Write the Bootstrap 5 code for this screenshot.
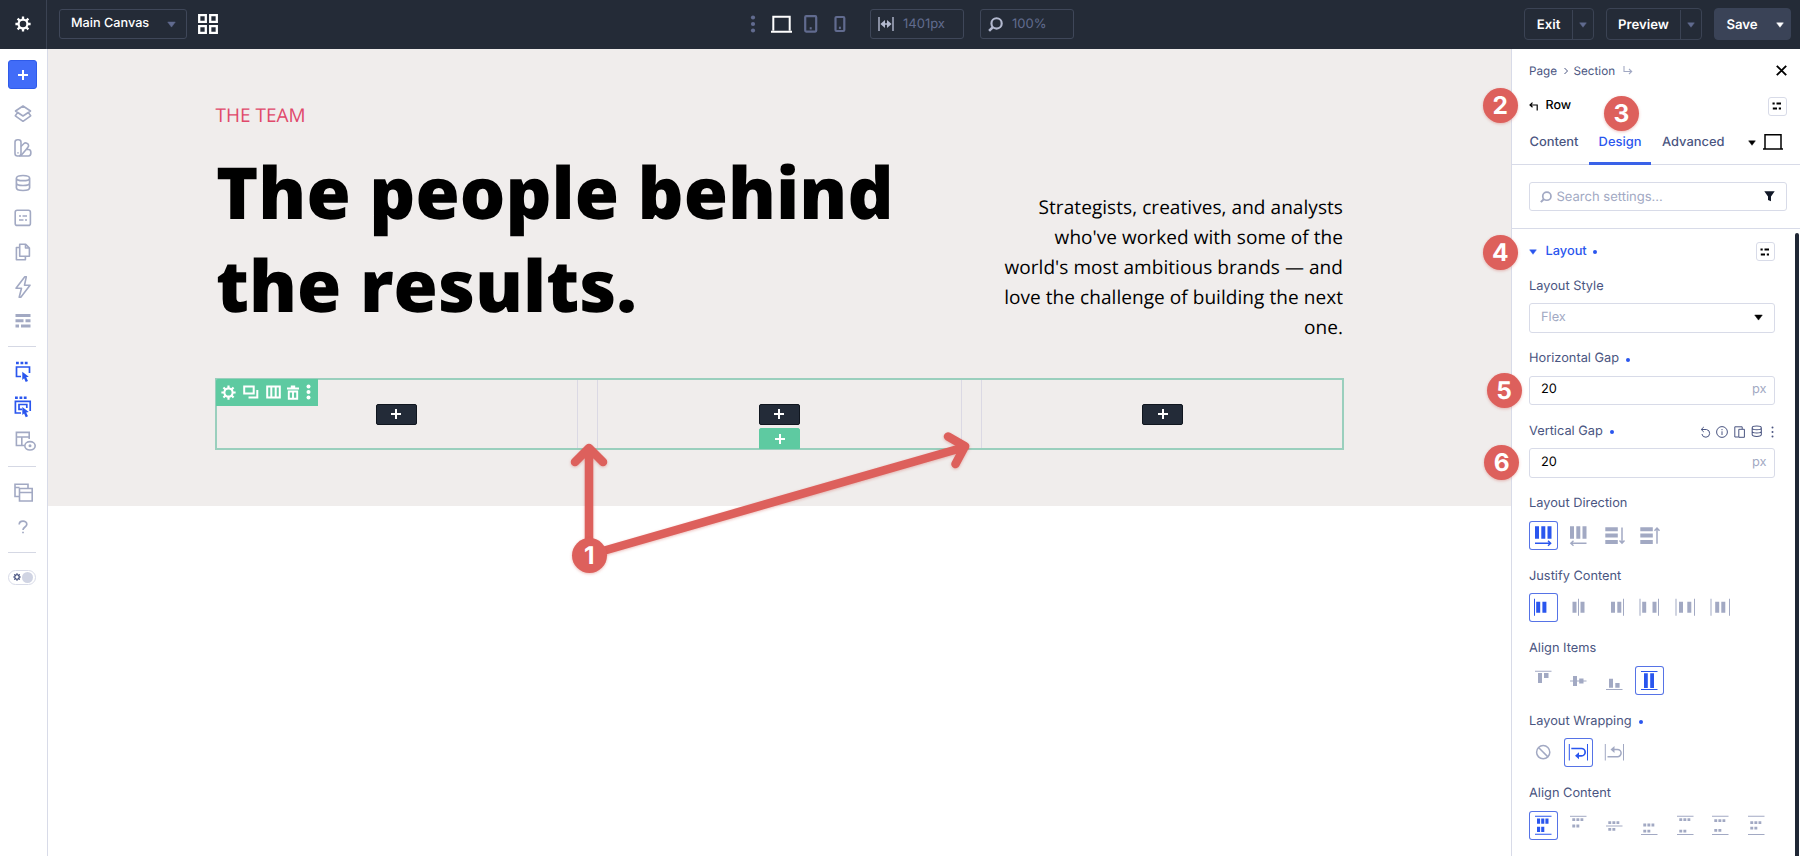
<!DOCTYPE html>
<html lang="en">
<head>
<meta charset="utf-8">
<title>Main Canvas</title>
<meta name="viewport" content="width=device-width, initial-scale=1">
<link href="https://cdn.jsdelivr.net/npm/bootstrap@5.3.0/dist/css/bootstrap.min.css" rel="stylesheet">
<script src="https://cdn.jsdelivr.net/npm/bootstrap@5.3.0/dist/js/bootstrap.bundle.min.js" defer></script>
<style>
  :root { --ink:#242b37; --blue:#2a56ee; --mute:#a2a9c3; --label:#4a5581; --line:#d8dbe8; --teal:#5ecaa1; --coral:#dd605c; }
  body { font-family: Inter, "Liberation Sans", sans-serif; font-size: 13px; line-height: 20px; height: 856px; overflow: hidden; background: #fff; color: #000; text-rendering: geometricPrecision; }
  svg { display: block; flex: none; overflow: visible; }
  .topbar { height: 49px; background: var(--ink); color: #fff; padding-bottom: 1px; }
  .topbar-cell { width: 47px; height: 49px; border-right: 1px solid #3b4353; }
  .box-dark { border: 1px solid #3f4759; border-radius: 3px; height: 30px; }
  .canvas-pick { width: 128px; margin-left: 12px; padding: 0 10px 0 11px; font-weight: 500; font-size: 12.7px; }
  .metric { width: 94px; color: #616b8f; padding: 0 7px; gap: 9px; font-weight: 400; }
  .devices { margin-left: 531.5px; }
  .split-btn { height: 32px; border: 1px solid #3b4354; border-radius: 4px; color: #fff; font-weight: 600; font-size: 13.2px; padding-top: 1px; }
  .split-btn .arrow { width: 21px; border-left: 1px solid #3b4354; }
  .split-btn.solid { background: #3a4357; border-color: #3a4357; }
  .split-btn.solid .arrow { border-left: 0; }
  .rail { width: 48px; border-right: 1px solid var(--line); padding-top: 11px; padding-right: 1px; color: var(--mute); height: 807px; }
  .rail-add { width: 29px; height: 29px; border-radius: 3px; background: #416cf8; border: 1px solid #2f5bea; color: #fff; margin-bottom: 7.5px; margin-right: 1px; flex: none; }
  .rail-item { height: 34.6px; width: 46px; flex: none; }
  .rail-sep { width: 28px; height: 1px; background: #d5d8e4; margin: 7.5px 2px 7.800px 0; flex: none; }
  .theme-toggle { width: 28px; height: 15px; border: 1px solid var(--line); border-radius: 8px; margin-top: 9px; padding: 0 2px 0 4px; margin-right: 2px; }
  .theme-toggle i { width: 11px; height: 11px; border-radius: 50%; background: #d0d4e3; }
  .stage { width: 1463px; }
  .hero { height: 457px; background: #f0edec; font-family: "Open Sans", sans-serif; padding-top: 51px; }
  .hero-in { width: 1129px; }
  .hero-top { height: 278px; }
  .eyebrow { color: #e0486a; font-size: 19px; line-height: 30px; padding-left: .5px; }
  .hero h1 { font-size: 71.7px; line-height: 93.4px; font-weight: 800; margin: 16px 0 0; width: 720px; padding-left: 1px; }
  .blurb { font-size: 19px; line-height: 30.1px; width: 348px; letter-spacing: .06px; padding: 92px 1px 0 0; }
  .row-frame { height: 72px; border: 2px solid #9acfbd; gap: 19px; }
  .slot { flex: 1 1 0; }
  .slot-mid { border: solid #dbd9e4; border-width: 0 1px; }
  .slot-first { border-right: 1px solid #dbd9e4; margin-left: -2px; }
  .slot-last { border-left: 1px solid #dbd9e4; margin-right: -2px; }
  .add-chip { width: 41px; height: 21px; border-radius: 2px; background: #232b38; border: 1px solid #10161f; color: #fff; }
  .add-chip.teal { background: var(--teal); border-color: var(--teal); bottom: -1px; left: 50%; margin-left: -20.5px; border-radius: 2px 2px 0 0; }
  .row-tools { left: -1px; top: -1px; width: 102px; height: 27px; background: var(--teal); color: #fff; padding: 0 7px 1px 5px; border-radius: 2px 0 0 0; z-index: 2; }
  .panel { width: 289px; height: 807px; border-left: 1px solid var(--line); background: #fff; }
  .crumbs { height: 43px; padding: 0 13px 0 17px; color: var(--label); font-size: 11.7px; }
  .title-row { height: 28px; padding: 0 13.5px 0 16.5px; font-weight: 500; font-size: 12.5px; }
  .tabs { height: 45px; border-bottom: 1px solid var(--line); color: var(--label); font-weight: 500; font-size: 12.9px; }
  .tabs span { height: 45px; line-height: 45px; }
  .tab-on { width: 62px; text-align: center; color: var(--blue); border-bottom: 3px solid #3a62e8; }
  .search-wrap { height: 64px; border-bottom: 1px solid var(--line); padding: 0 13.5px 0 16.5px; }
  .field { height: 29.5px; border: 1px solid var(--line); border-radius: 3px; padding: 0 11px; background: #fff; }
  .faint { color: var(--mute); }
  .settings { height: 627px; padding: 12.5px 25.500px 0 17px; font-size: 12.8px; }
  .settings-head { height: 20px; margin-bottom: 15px; color: var(--blue); font-weight: 500; }
  .mini { width: 19px; height: 19px; border: 1px solid var(--line); border-radius: 3px; }
  .group { height: 72.5px; color: var(--label); }
  .group .name { height: 20px; margin-bottom: 6.5px; }
  .dot { width: 4px; height: 4px; border-radius: 50%; background: var(--blue); display: inline-block; margin-top: 1px; }
  .opts { gap: 6.45px; color: var(--mute); }
  .opt { width: 29px; height: 29px; border-radius: 3px; }
  .opt.on { color: var(--blue); box-shadow: inset 0 0 0 1px #5673e6; }
  .opt svg { width: 29px; height: 29px; fill: currentColor; }
  .st { fill: none; stroke: currentColor; }
  .opt .st { fill: none; }
  .scroll { width: 4px; top: 233px; bottom: -4px; right: 1px; background: #202735; border-radius: 2px; }
  .pin { width: 35px; height: 35px; border-radius: 50%; background: var(--coral); color: #fff; font-weight: 700; font-size: 24.5px; line-height: 35px; text-align: center; box-shadow: 0 1px 3px rgba(200,70,60,.35); margin: -17.5px 0 0 -17.5px; z-index: 5; }
  .arrows { left: 0; top: 0; z-index: 4; pointer-events: none; filter: drop-shadow(0 1px 1.5px rgba(200,70,60,.35)); }
</style>
</head>
<body class="position-relative">
<svg width="0" height="0" class="position-absolute">
  <symbol id="plus" viewBox="0 0 12 12"><path d="M6 1v10M1 6h10" fill="none" stroke="currentColor" stroke-width="2"/></symbol>
  <symbol id="tri" viewBox="0 0 10 7"><path d="M.8.8h8.4L5 6.4z" fill="currentColor" stroke="currentColor" stroke-linejoin="round" stroke-width=".6"/></symbol>
  <symbol id="gear" viewBox="0 0 16 16"><circle cx="8" cy="8" r="4.4" fill="none" stroke="currentColor" stroke-width="2.2"/><path d="M8 .4v3M8 12.6v3M.4 8h3M12.6 8h3M2.6 2.6l2.2 2.2M11.2 11.2l2.2 2.2M13.4 2.6l-2.2 2.2M4.8 11.2l-2.2 2.2" stroke="currentColor" stroke-width="2.3" fill="none"/></symbol>
  <symbol id="mag" viewBox="0 0 14 14"><circle cx="8" cy="6" r="4.8" fill="none" stroke="currentColor" stroke-width="2"/><path d="M4.6 9.4L1 13" stroke="currentColor" stroke-width="2.4" fill="none"/></symbol>
  <symbol id="presets" viewBox="0 0 10 8"><path d="M.5 1.5h2.200M4.500 1.500h4.500M.8 6.500H5M6.800 6.500h2.200" stroke="#000" stroke-width="1.900" fill="none"/></symbol>
  <symbol id="db" viewBox="0 0 16 18"><path class="st" d="M1.400 4.200C1.400 2.400 4 1.500 8 1.500s6.600.9 6.600 2.700S12 6.700 8 6.700 1.400 6 1.400 4.200zv9.600c0 1.600 3 2.700 6.600 2.700s6.600-1.100 6.600-2.700V4.200M1.400 9c0 1.500 3 2.500 6.600 2.500s6.600-1 6.600-2.500"/></symbol>
</svg>

<header class="topbar d-flex align-items-center">
  <div class="topbar-cell d-flex align-items-center justify-content-center"><svg width="16" height="16" style="margin-right:1px"><use href="#gear"/></svg></div>
  <div class="box-dark canvas-pick d-flex align-items-center justify-content-between"><span>Main Canvas</span><svg width="9" height="7" color="#616b8f"><use href="#tri"/></svg></div>
  <svg class="st" style="margin-left:11px" width="20" height="20" stroke-width="2.300"><path d="M1.200 1.200h6.600v6.600H1.200zM12.200 1.200h6.600v6.600h-6.600zM1.200 12.200h6.600v6.600H1.200zM12.200 12.200h6.600v6.600h-6.600z"/></svg>
  <div class="devices d-flex align-items-center">
    <svg width="6" height="18" fill="#616b8f"><circle cx="3" cy="2.500" r="2.100"/><circle cx="3" cy="9" r="2.100"/><circle cx="3" cy="15.500" r="2.100"/></svg>
    <svg class="st" style="margin-left:15.500px" width="22" height="18" stroke-width="2"><path d="M2.300 15.500V1.700h16.400v13.800M0 16.800h21"/></svg>
    <svg class="st" style="margin-left:11px;color:#616b8f" width="14" height="18" stroke-width="2.200"><rect x="1.200" y="1.200" width="11" height="15.400" rx="1"/><path d="M5.700 13.300h2"/></svg>
    <svg class="st" style="margin-left:16px;color:#616b8f" width="12" height="18" stroke-width="2.200"><rect x="1.500" y="2" width="8.800" height="14" rx="1"/><path d="M4.900 12.800h2"/></svg>
  </div>
  <div class="box-dark metric d-flex align-items-center" style="margin-left:24px">
    <svg width="16" height="14" color="#b3b9cf" fill="currentColor"><path class="st" stroke-width="1.400" d="M1 0v14M15 0v14M4 7h8"/><path d="M2.400 7L7 3v8zM13.600 7L9 3v8z"/></svg><span>1401px</span></div>
  <div class="box-dark metric d-flex align-items-center" style="margin-left:16px"><svg width="15" height="15" color="#b3b9cf"><use href="#mag"/></svg><span>100%</span></div>
  <div class="d-flex ms-auto" style="gap:12px;margin-right:9px">
    <div class="split-btn d-flex align-items-center" style="width:70px"><span class="flex-fill text-center">Exit</span><span class="arrow h-100 d-flex align-items-center justify-content-center"><svg width="8" height="6" color="#616b8f"><use href="#tri"/></svg></span></div>
    <div class="split-btn d-flex align-items-center" style="width:96px"><span class="flex-fill text-center">Preview</span><span class="arrow h-100 d-flex align-items-center justify-content-center"><svg width="8" height="6" color="#616b8f"><use href="#tri"/></svg></span></div>
    <div class="split-btn solid d-flex align-items-center" style="width:77px"><span class="flex-fill text-center">Save</span><span class="arrow h-100 d-flex align-items-center justify-content-center"><svg width="8" height="6"><use href="#tri"/></svg></span></div>
  </div>
</header>

<main class="d-flex">
  <nav class="rail d-flex flex-column align-items-center">
    <div class="rail-add d-flex align-items-center justify-content-center"><svg width="12" height="12"><use href="#plus"/></svg></div>
    <div class="rail-item d-flex align-items-center justify-content-center"><svg class="st" width="18" height="18" stroke-width="1.600" stroke-linejoin="round"><path d="M9 1l7.500 5L9 11 1.500 6zM3.600 7.600L1.300 10.800 9 16.300l7.700-5.500-2.300-3.200"/></svg></div>
    <div class="rail-item d-flex align-items-center justify-content-center"><svg class="st" width="18" height="18" stroke-width="1.600" stroke-linejoin="round"><rect x="1" y=".8" width="6" height="16.200" rx="2.500"/><path d="M7 7.500l3-3c1.200-1.200 4.800-.5 4.600 2.300-.1 1-5.500 7.800-7.900 9.900M12 10.500h2.500c3.200 0 3.200 6.500 0 6.500H5"/><path d="M4 13.200v1.200"/></svg></div>
    <div class="rail-item d-flex align-items-center justify-content-center"><svg width="16" height="18" stroke-width="1.700"><use href="#db"/></svg></div>
    <div class="rail-item d-flex align-items-center justify-content-center"><svg class="st" width="18" height="18" stroke-width="1.600"><rect x="1.200" y="1.200" width="15.200" height="15.200" rx="2"/><path d="M5 7h2M8.500 7H13M5 11h4.500M11 11h2"/></svg></div>
    <div class="rail-item d-flex align-items-center justify-content-center"><svg class="st" width="16" height="18" stroke-width="1.600" stroke-linejoin="round"><path d="M4.700 1.200h6l3.700 3.800v8.200H4.700zM10.500 1.200V5h4M4.500 4.500H1.400v12.300h9V13.500"/></svg></div>
    <div class="rail-item d-flex align-items-center justify-content-center"><svg class="st" width="16" height="22" stroke-width="1.600" stroke-linejoin="round"><path d="M9.800.8L1 12.200h5.500L4.200 21.200h1.600L15 9.200H9.500l1.800-8.400z"/></svg></div>
    <div class="rail-item d-flex align-items-center justify-content-center"><svg width="16" height="16" class="st" stroke-width="3"><path d="M.5 2.500h15M.5 7.700h8M10.500 7.700h5M.5 13h3.500M6 13h9.500"/></svg></div>
    <div class="rail-sep"></div>
    <div class="rail-item d-flex align-items-center justify-content-center" style="color:var(--blue)"><svg width="16" height="22" fill="currentColor"><path class="st" stroke-width="2.400" d="M1 2h2.800M5.500 2h2.800M9.800 2h2.800"/><path class="st" stroke-width="1.700" d="M6 15.500H1.500V6h13v6"/><path d="M7.300 10.800l6.500 5-2.600.5 1.800 3.700-2.300 1-1.600-3.700-1.800 1.600z"/></svg></div>
    <div class="rail-item d-flex align-items-center justify-content-center" style="color:var(--blue)"><svg width="18" height="22" fill="currentColor"><path class="st" stroke-width="2.400" d="M1 1.700h2.800M5.500 1.700h2.800M9.800 1.700h2.800"/><path class="st" stroke-width="1.700" d="M7 17H1.400V5.300h14.800V15"/><path class="st" stroke-width="1.700" d="M8 13.400H5V8.500h7.800V12"/><path d="M8.300 11l6.500 5-2.600.5 1.800 3.700-2.300 1-1.600-3.700-1.800 1.600z"/></svg></div>
    <div class="rail-item d-flex align-items-center justify-content-center" style="padding-left:5px"><svg class="st" width="21" height="20" stroke-width="1.600"><path d="M9.500 14.500H1.400V1.400h12.800V8M1.400 6h12.800M6.800 6v8.500"/><ellipse cx="15" cy="14.800" rx="5.200" ry="4.200"/><circle cx="15" cy="14.800" r=".7"/></svg></div>
    <div class="rail-sep"></div>
    <div class="rail-item d-flex align-items-center justify-content-center"><svg class="st" width="19" height="19" stroke-width="1.600"><path d="M5 13.500H1V1.200h13v4M1 4.500h4.500M5.500 5.500h12.700v12.500H5.500zM5.500 9.500h12.700"/></svg></div>
    <div class="rail-item d-flex align-items-center justify-content-center"><svg class="st" width="10" height="14" stroke-width="1.700"><path d="M1.200 4.500C1.200 0 8.800 0 8.800 4.300 8.800 7 5 7 5 10M5 11.700v1.600"/></svg></div>
    <div class="rail-sep"></div>
    <div class="theme-toggle d-flex align-items-center justify-content-between"><svg width="8" height="8" color="#3c4878"><use href="#gear"/></svg><i></i></div>
  </nav>

  <div class="stage">
    <section class="hero">
      <div class="hero-in mx-auto">
        <div class="hero-top d-flex justify-content-between">
          <div><div class="eyebrow">THE TEAM</div><h1>The people behind<br>the results.</h1></div>
          <p class="blurb text-end mb-0">Strategists, creatives, and analysts who've worked with some of the world's most ambitious brands — and love the challenge of building the next one.</p>
        </div>
        <div class="row-frame d-flex position-relative">
          <div class="slot slot-first d-flex align-items-center justify-content-center"><div class="add-chip d-flex align-items-center justify-content-center"><svg width="12" height="12"><use href="#plus"/></svg></div></div>
          <div class="slot slot-mid d-flex align-items-center justify-content-center"><div class="add-chip d-flex align-items-center justify-content-center"><svg width="12" height="12"><use href="#plus"/></svg></div></div>
          <div class="slot slot-last d-flex align-items-center justify-content-center"><div class="add-chip d-flex align-items-center justify-content-center"><svg width="12" height="12"><use href="#plus"/></svg></div></div>
          <div class="row-tools position-absolute d-flex align-items-center justify-content-between">
            <svg width="15" height="15"><use href="#gear"/></svg>
            <svg class="st" width="16" height="14" stroke-width="2"><path d="M1.200 1.500h9.500v7H1.200zM14.300 5v7.500H5.500"/></svg>
            <svg class="st" width="15" height="14" stroke-width="2"><path d="M1.200 1.500h12.600v11H1.200zM5.300 1.500v11M9.700 1.500v11"/></svg>
            <svg class="st" width="12" height="15" stroke-width="1.900"><path d="M0 3.500h12M3.800 1.500h4.400M1.800 6.500h8.400v7.200H1.800zM6 6.500v7"/></svg>
            <svg width="5" height="16" fill="currentColor"><circle cx="2.500" cy="2.500" r="2"/><circle cx="2.500" cy="8" r="2"/><circle cx="2.500" cy="13.500" r="2"/></svg>
          </div>
          <span class="add-chip teal position-absolute d-flex align-items-center justify-content-center"><svg width="12" height="12"><use href="#plus"/></svg></span>
        </div>
      </div>
    </section>
  </div>

  <aside class="panel">
    <div class="crumbs d-flex align-items-center"><span>Page</span><svg class="st" style="margin:0 6px 0 6.500px" width="4" height="8" stroke-width="1"><path d="M.5 1l3 3-3 3"/></svg><span>Section</span>
      <svg class="st faint" style="margin-left:8px" width="10" height="9" stroke-width="1.100"><path d="M1 0v5.500h7.500M6 3l2.700 2.500L6 8"/></svg>
      <svg class="st ms-auto" width="11" height="11" color="#000" stroke-width="1.900"><path d="M.8.8l9.400 9.400M10.200.8L.8 10.200"/></svg></div>
    <div class="title-row d-flex align-items-center"><svg class="st" width="9" height="9" stroke-width="1.200"><path d="M8.200 8.500V3H1M3.500.6L1 3l2.500 2.300"/></svg><span style="margin-left:8px">Row</span><span class="mini ms-auto d-flex align-items-center justify-content-center"><svg width="10" height="8"><use href="#presets"/></svg></span></div>
    <div class="tabs d-flex"><span style="width:77px;padding-left:17.500px">Content</span><span class="tab-on">Design</span><span style="padding-left:11px">Advanced</span>
      <svg class="ms-auto" style="margin-top:19.500px" width="8" height="6" color="#000"><use href="#tri"/></svg>
      <svg class="st" style="margin:14px 17px 0 7px" width="20" height="16" color="#000" stroke-width="1.500"><path d="M2 14.500V.8h16v13.700M0 14.900h20"/></svg></div>
    <div class="search-wrap d-flex align-items-center"><div class="field d-flex align-items-center w-100 faint"><svg width="12" height="12" style="margin-right:5px;margin-left:-1px"><use href="#mag"/></svg><span>Search settings...</span><svg class="ms-auto" width="11" height="11" color="#111827" fill="currentColor"><path d="M.3.3h10.400L7 5.500v4.700L4 9V5.500z"/></svg></div></div>
    <div class="settings">
      <div class="settings-head d-flex align-items-center"><svg width="8" height="6"><use href="#tri"/></svg><span style="margin-left:8.500px">Layout</span><i class="dot" style="margin-left:6px"></i><span class="mini ms-auto d-flex align-items-center justify-content-center"><svg width="10" height="8"><use href="#presets"/></svg></span></div>
      <div class="group"><div class="name">Layout Style</div><div class="field faint d-flex align-items-center justify-content-between">Flex<svg width="9" height="7" color="#000"><use href="#tri"/></svg></div></div>
      <div class="group"><div class="name d-flex align-items-center">Horizontal Gap<i class="dot" style="margin-left:7px"></i></div><div class="field d-flex align-items-center justify-content-between"><span class="text-black">20</span><span class="faint" style="margin-right:-4px">px</span></div></div>
      <div class="group"><div class="name d-flex align-items-center">Vertical Gap<i class="dot" style="margin-left:7px"></i>
        <span class="d-flex align-items-center ms-auto" style="gap:5.700px;margin-right:.5px">
          <svg class="st" width="11" height="12" stroke-width="1"><path d="M1.500 3.500H6.500a3.900 3.900 0 1 1-4.600 4.500M3.800 1L1.200 3.500 3.800 6"/></svg>
          <svg class="st" width="12" height="12" stroke-width="1"><circle cx="6" cy="6" r="5.400"/><path d="M6 5.300V9M6 3v1.200"/></svg>
          <svg class="st" width="11" height="12" stroke-width="1"><path d="M4.500 11H.8V.8h7.400V3M4.800 3.300h5.600v8H4.800z"/></svg>
          <svg width="11.500" height="12.500" stroke-width="1.500"><use href="#db"/></svg>
          <svg style="margin-left:3px" width="3" height="12" fill="currentColor"><circle cx="1.500" cy="1.500" r="1"/><circle cx="1.500" cy="6" r="1"/><circle cx="1.500" cy="10.500" r="1"/></svg>
        </span></div><div class="field d-flex align-items-center justify-content-between"><span class="text-black">20</span><span class="faint" style="margin-right:-4px">px</span></div></div>
      <div class="group"><div class="name">Layout Direction</div><div class="opts d-flex">
        <div class="opt on"><svg><path d="M6 5.300h4v12.500H6zM12.300 5.300h4v12.500h-4zM18.500 5.300h4v12.500h-4z"/><path class="st" stroke-width="1.400" d="M6 22.200h15.500M19 19.700l2.700 2.500-2.700 2.500"/></svg></div>
        <div class="opt"><svg><path d="M6 5.300h4v12.500H6zM12.300 5.300h4v12.500h-4zM18.500 5.300h4v12.500h-4z"/><path class="st" stroke-width="1.400" d="M22.500 22.200H7M9.500 19.700l-2.700 2.500 2.700 2.500"/></svg></div>
        <div class="opt"><svg><path d="M5.300 6.300h12.500v4H5.300zM5.300 12.600h12.500v4H5.300zM5.300 18.900h12.500v4H5.300z"/><path class="st" stroke-width="1.500" d="M22 6.500v15.700M19.500 19.500l2.500 2.700 2.500-2.700"/></svg></div>
        <div class="opt"><svg><path d="M5.300 6.300h12.500v4H5.300zM5.300 12.600h12.500v4H5.300zM5.300 18.900h12.500v4H5.300z"/><path class="st" stroke-width="1.500" d="M22 22.700V7.200M19.500 9.700L22 7l2.500 2.700"/></svg></div>
      </div></div>
      <div class="group"><div class="name">Justify Content</div><div class="opts d-flex">
        <div class="opt on"><svg><path d="M5 5.700h1v17H5zM7.200 8.800h4v11h-4zM13.400 8.800h4v11h-4z"/></svg></div>
        <div class="opt"><svg><path d="M14 5.700h1v17h-1zM8.500 8.800h4v11h-4zM16.500 8.800h4v11h-4z"/></svg></div>
        <div class="opt"><svg><path d="M23 5.700h1v17h-1zM11 8.800h4v11h-4zM17.300 8.800h4v11h-4z"/></svg></div>
        <div class="opt"><svg><path d="M4.500 5.700h1v17h-1zM7.200 8.800h4v11h-4zM17.500 8.800h4v11h-4zM23 5.700h1v17h-1z"/></svg></div>
        <div class="opt"><svg><path d="M4.500 5.700h1v17h-1zM8 8.800h4v11H8zM16.300 8.800h4v11h-4zM23 5.700h1v17h-1z"/></svg></div>
        <div class="opt"><svg><path d="M4.500 5.700h1v17h-1zM9.200 8.800h4v11h-4zM15.300 8.800h4v11h-4zM23 5.700h1v17h-1z"/></svg></div>
      </div></div>
      <div class="group"><div class="name">Align Items</div><div class="opts d-flex">
        <div class="opt"><svg><path d="M6 4.800h16.500v1H6zM9 7h4v10H9zM15 7h4.500v5H15z"/></svg></div>
        <div class="opt"><svg><path d="M6 14.500h16.500v1H6zM9 10h4v10H9zM15.200 12.500h4.300v5h-4.300z"/></svg></div>
        <div class="opt"><svg><path d="M6 23h16.500v1H6zM9 12.700h4v9H9zM15.300 17h4.300v4.700h-4.300z"/></svg></div>
        <div class="opt on"><svg><path d="M6 5h16.500v1H6zM6 23h16.500v1H6zM9 7.300h3.800V22H9zM15.200 7.300H19V22h-3.800z"/></svg></div>
      </div></div>
      <div class="group"><div class="name d-flex align-items-center">Layout Wrapping<i class="dot" style="margin-left:7px"></i></div><div class="opts d-flex">
        <div class="opt"><svg><g class="st" stroke-width="1.500"><circle cx="14.200" cy="14.200" r="6.600"/><path d="M9.500 9.500l9.400 9.400"/></g></svg></div>
        <div class="opt on"><svg><path d="M4.800 6h1v16.500h-1zM23 6h1v16.500h-1z"/><path class="st" stroke-width="1.700" d="M7.300 10.500h10.200a3.600 3.600 0 0 1 0 7.300h-4"/><path d="M11 17.800l4-3.500v7z"/></svg></div>
        <div class="opt"><svg><path d="M4.800 6h1v16.500h-1zM23 6h1v16.500h-1z"/><path class="st" stroke-width="1.500" d="M7.500 18.700h10a3.600 3.600 0 0 0 0-7.200h-4"/><path d="M10.500 11.500l4-3.500v7z"/></svg></div>
      </div></div>
      <div class="group"><div class="name">Align Content</div><div class="opts d-flex">
        <div class="opt on"><svg><path d="M6 4.800h16.500v1H6zM6 22.800h16.500v1H6zM8 7.600h3.100v5.200H8zM12.200 7.600h3.100v5.200h-3.100zM16.400 7.600h3.100v5.200h-3.100zM8 15.700h3.100v5.200H8zM12.200 15.700h3.100v5.200h-3.100z"/></svg></div>
        <div class="opt"><svg><path d="M6 4.800h16.500v1H6z"/><path class="st" stroke-width="2.800" stroke-dasharray="2.900 1.200" d="M8.300 8.700h11M8.300 15h7"/></svg></div>
        <div class="opt"><svg><path d="M6 14.500h16.500v1H6z"/><path class="st" stroke-width="2.800" stroke-dasharray="2.900 1.200" d="M8.300 11.700h11M8.300 18.300h7"/></svg></div>
        <div class="opt"><svg><path d="M6 23h16.500v1H6z"/><path class="st" stroke-width="2.800" stroke-dasharray="2.900 1.200" d="M8.300 14h11M8.300 20.200h7"/></svg></div>
        <div class="opt"><svg><path d="M6 4.800h16.500v1H6zM6 23h16.500v1H6z"/><path class="st" stroke-width="2.800" stroke-dasharray="2.900 1.200" d="M8.300 8.700h11M8.300 20.200h7"/></svg></div>
        <div class="opt"><svg><path d="M6 4.800h16.500v1H6zM6 23h16.500v1H6z"/><path class="st" stroke-width="2.800" stroke-dasharray="2.900 1.200" d="M8.300 9.700h11M8.300 19.300h7"/></svg></div>
        <div class="opt"><svg><path d="M6 4.800h16.500v1H6zM6 23h16.500v1H6z"/><path class="st" stroke-width="2.800" stroke-dasharray="2.900 1.200" d="M8.300 11.700h11M8.300 17.200h7"/></svg></div>
      </div></div>
    </div>
  </aside>
</main>

<div class="scroll position-absolute"></div>
<svg class="arrows position-absolute" width="1100" height="600" fill="none" stroke="#dd605c" stroke-width="8.500" stroke-linecap="round" stroke-linejoin="round">
  <path d="M589 555V449M575 462l14-14 14 14M589 555L965 447M948 436.500l17 9.700-9.500 17.800"/>
</svg>
<span class="pin position-absolute" style="left:589.300px;top:555.500px">1</span>
<span class="pin position-absolute" style="left:1500.300px;top:105px">2</span>
<span class="pin position-absolute" style="left:1621.300px;top:113.700px">3</span>
<span class="pin position-absolute" style="left:1500.300px;top:252.300px">4</span>
<span class="pin position-absolute" style="left:1504px;top:390px">5</span>
<span class="pin position-absolute" style="left:1501.700px;top:462.300px">6</span>
</body>
</html>
